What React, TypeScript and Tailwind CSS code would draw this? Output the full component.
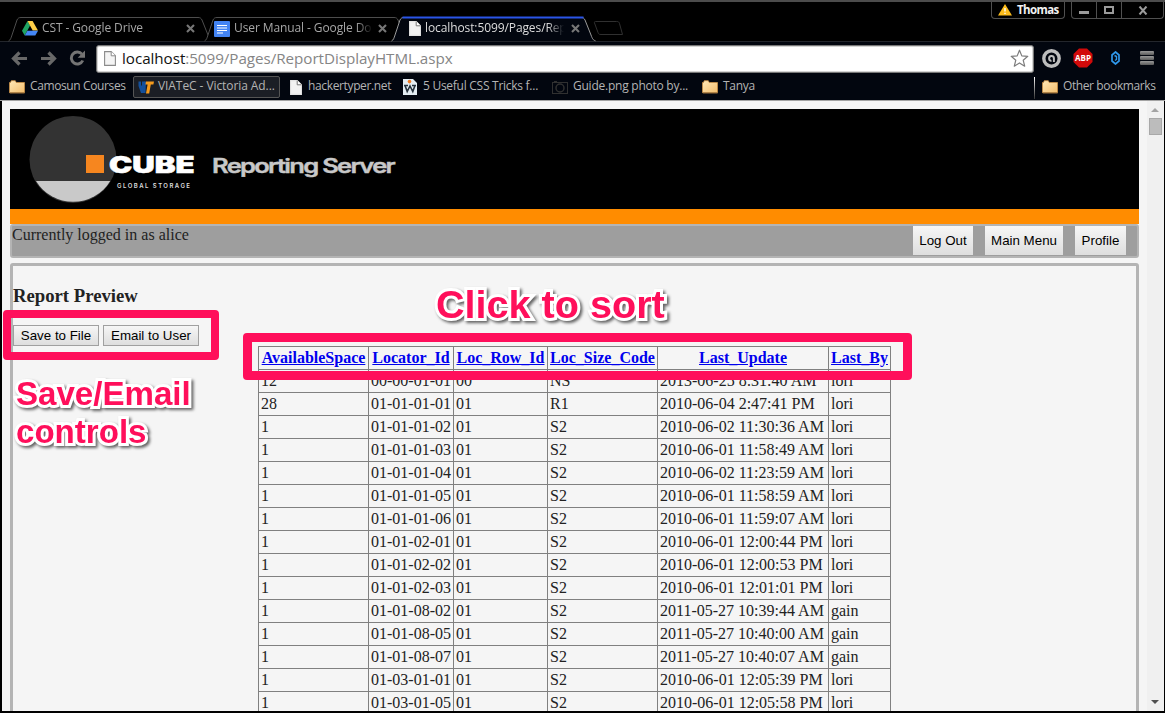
import type { ReactNode } from "react";

const rows = [
  ["12", "00-00-01-01", "00", "NS", "2013-06-25 8:31:40 AM", "lori"],
  ["28", "01-01-01-01", "01", "R1", "2010-06-04 2:47:41 PM", "lori"],
  ["1", "01-01-01-02", "01", "S2", "2010-06-02 11:30:36 AM", "lori"],
  ["1", "01-01-01-03", "01", "S2", "2010-06-01 11:58:49 AM", "lori"],
  ["1", "01-01-01-04", "01", "S2", "2010-06-02 11:23:59 AM", "lori"],
  ["1", "01-01-01-05", "01", "S2", "2010-06-01 11:58:59 AM", "lori"],
  ["1", "01-01-01-06", "01", "S2", "2010-06-01 11:59:07 AM", "lori"],
  ["1", "01-01-02-01", "01", "S2", "2010-06-01 12:00:44 PM", "lori"],
  ["1", "01-01-02-02", "01", "S2", "2010-06-01 12:00:53 PM", "lori"],
  ["1", "01-01-02-03", "01", "S2", "2010-06-01 12:01:01 PM", "lori"],
  ["1", "01-01-08-02", "01", "S2", "2011-05-27 10:39:44 AM", "gain"],
  ["1", "01-01-08-05", "01", "S2", "2011-05-27 10:40:00 AM", "gain"],
  ["1", "01-01-08-07", "01", "S2", "2011-05-27 10:40:07 AM", "gain"],
  ["1", "01-03-01-01", "01", "S2", "2010-06-01 12:05:39 PM", "lori"],
  ["1", "01-03-01-05", "01", "S2", "2010-06-01 12:05:58 PM", "lori"],
];

const headers = ["AvailableSpace", "Locator_Id", "Loc_Row_Id", "Loc_Size_Code", "Last_Update", "Last_By"];

function PageIcon({ outline = false }: { outline?: boolean }) {
  return (
    <svg width="12" height="15" viewBox="0 0 12 15" className="shrink-0">
      <path
        d="M.6.6h6.6l4.2 4.2v9.6H.6z"
        fill={outline ? "#f4f4f4" : "#f2f2f2"}
        stroke={outline ? "#8a8a8a" : "#e4e4e4"}
        strokeWidth="1.1"
      />
      <path d="M7.2.6v4.2h4.2" fill="#fff" stroke={outline ? "#8a8a8a" : "#777"} strokeWidth="1" />
    </svg>
  );
}

function Folder() {
  return (
    <svg width="16" height="14" viewBox="0 0 16 14" className="shrink-0">
      <defs>
        <linearGradient id="folder" x1="0" y1="0" x2="1" y2="1">
          <stop offset="0" stopColor="#ffe9b8" />
          <stop offset="1" stopColor="#f3bd6c" />
        </linearGradient>
      </defs>
      <path d="M.5 2.5h1l.8-1.8h4l.9 1.8h8.3v10.2H.5z" fill="url(#folder)" stroke="#c98f45" strokeWidth=".8" />
      <path d="M1 13.2h14.5" stroke="#7a5a34" strokeWidth=".8" />
    </svg>
  );
}

function TabClose() {
  return (
    <svg width="9" height="9" viewBox="0 0 9 9" className="shrink-0">
      <path d="M1 1l7 7M8 1L1 8" stroke="#777" strokeWidth="2.1" />
    </svg>
  );
}

function Tab({ active, icon, title, className }: { active?: boolean; icon: ReactNode; title: string; className: string }) {
  return (
    <div className={`relative flex h-[25px] shrink-0 items-center ${className}`}>
      <svg className="absolute left-0 top-0" width="206" height="26" viewBox="0 0 206 26">
        <path
          d="M.5 25c2-1 2.500-3 3.500-6L9 4c1-2 2-2.500 4-2.500h177c2 0 3 .5 4 2.500l6 15c1.500 4 2 5 4.500 5.800"
          fill={active ? "#02060f" : "#000"}
          stroke={active ? "#9a9a9a" : "#4d4d4d"}
        />
        {active && <path d="M11.500 1.500h181" stroke="#2a55e8" strokeWidth="2" />}
      </svg>
      <div className="relative flex w-full items-center">
        {icon}
        <span className={`mb-[2px] ml-[4px] w-[139px] whitespace-nowrap font-['Open_Sans',sans-serif] text-[12px] leading-[18px] ${active ? "tracking-[-0.1px] text-[#dcdcdc]" : "tracking-[-0.1px] text-[#a6a6a6]"} [mask-image:linear-gradient(to_right,black_88%,transparent)]`}>
          {title}
        </span>
        <span className="ml-auto flex"><TabClose /></span>
      </div>
    </div>
  );
}

function Bookmark({ icon, text, className = "" }: { icon: ReactNode; text: string; className?: string }) {
  return (
    <div className={`flex h-[22px] shrink-0 items-center whitespace-nowrap text-[12px] leading-[18px] text-[#b4b4b4] ${className}`}>
      {icon}
      <span className="mb-[2px]">{text}</span>
    </div>
  );
}

function TitleBar() {
  return (
    <div className="flex h-[17px] shrink-0 justify-end border-t-2 border-[#4c4c4c] pr-px font-['Open_Sans',sans-serif]">
      <div className="flex h-[17px] w-[74px] items-center rounded-b-[4px] border border-t-0 border-[#505050] pl-[6px]">
        <svg width="14" height="12" viewBox="0 0 14 12">
          <path d="M7 0l7 11.500H0z" fill="#fdbd1c" />
          <path d="M7 4v3.600M7 8.700v1.300" stroke="#fff" strokeWidth="1.400" />
        </svg>
        <span className="ml-[5px] text-[11.500px] font-bold leading-[16px] tracking-[-0.6px] text-[#f2f2f2]">Thomas</span>
      </div>
      <div className="ml-[6px] flex h-[17px] w-[93px] rounded-b-[4px] border border-t-0 border-[#505050]">
        <div className="flex w-[25px] items-center justify-center border-r border-[#505050]"><i className="mt-[4px] h-[3px] w-[10px] bg-[#9b9b9b]" /></div>
        <div className="flex w-[25px] items-center justify-center border-r border-[#505050]"><i className="h-[8px] w-[10px] border-2 border-[#9b9b9b]" /></div>
        <div className="flex flex-1 items-center justify-center">
          <svg width="10" height="9" viewBox="0 0 10 9"><path d="M1.500.5l7 8M8.500.5l-7 8" stroke="#9b9b9b" strokeWidth="2" /></svg>
        </div>
      </div>
    </div>
  );
}

function TabStrip() {
  const drive = (
    <svg width="16" height="15" viewBox="0 0 16 15" className="shrink-0">
      <path d="M5.500 0L0 9.800l2.700 4.700L8.100 4.600z" fill="#1fa463" />
      <path d="M5.500 0h5.100L16 9.500h-5.300z" fill="#ffcf48" />
      <path d="M5.400 9.800H16l-2.700 4.700H2.700z" fill="#4587f4" />
    </svg>
  );
  const docs = (
    <svg width="16" height="16" viewBox="0 0 16 16" className="shrink-0">
      <rect width="16" height="16" rx="1" fill="#4384f3" />
      <path d="M3 4.500h10M3 7h10M3 9.500h10M3 12h6" stroke="#fff" strokeWidth="1.200" />
    </svg>
  );
  return (
    <div className="-mt-px flex h-[25px] shrink-0 pl-[8px]">
      <Tab icon={drive} title="CST - Google Drive" className="w-[196px] pl-[14px] pr-[9px]" />
      <Tab icon={docs} title="User Manual - Google Do" className="w-[187px] pl-[10px] pr-[4px]" />
      <Tab active icon={<PageIcon />} title="localhost:5099/Pages/Rep" className="z-10 w-[202px] pl-[18px] pr-[13px]" />
      <svg width="32" height="24" viewBox="0 0 32 24" className="shrink-0">
        <path d="M2.500 5.500h21c2 0 2.500.5 3 2l3 11H8c-2 0-2.500-.5-3-2L1.500 7c-.3-1 0-1.500 1-1.500z" fill="none" stroke="#303030" />
      </svg>
    </div>
  );
}

function Toolbar() {
  return (
    <div className="flex h-[32px] shrink-0 items-center bg-[#02060f] pl-[11px]">
      <svg width="17" height="15" viewBox="0 0 17 15"><path d="M8.500 1.500L2.500 7.500l6 6M3 7.500h13" fill="none" stroke="#686868" strokeWidth="3.200" /></svg>
      <svg className="ml-[12px]" width="17" height="15" viewBox="0 0 17 15"><path d="M8.500 1.500l6 6-6 6M14 7.500H1" fill="none" stroke="#686868" strokeWidth="3.200" /></svg>
      <svg className="ml-[12px]" width="17" height="16" viewBox="0 0 17 16">
        <path d="M13 4.200A6 6 0 1 0 13.800 10.500" fill="none" stroke="#747474" strokeWidth="2.900" />
        <path d="M16 .5v7.300H8.700z" fill="#747474" />
      </svg>
      <div className="ml-[10px] mt-[1px] flex h-[28px] w-[938px] shrink-0 items-center rounded-[3px] border border-[#777] bg-white pl-[7px] pr-[4px] shadow-[inset_0_0_0_1px_#d4d4d4]">
        <PageIcon outline />
        <span className="mb-[2px] ml-[6px] flex-1 whitespace-nowrap font-['Open_Sans',sans-serif] text-[15.200px] leading-[22px] tracking-[-0.04px] text-[#858585]">
          <span className="text-[#111]">localhost</span>:5099/Pages/ReportDisplayHTML.aspx
        </span>
        <svg width="19" height="19" viewBox="0 0 19 19">
          <path d="M9.500 1.200l2.300 5.700 6 .4-4.600 3.900 1.500 6-5.200-3.300-5.200 3.300 1.500-6L1.200 7.300l6-.4z" fill="#fff" stroke="#7c7c7c" strokeWidth="1.200" strokeLinejoin="round" />
        </svg>
      </div>
      <svg className="ml-[8px]" width="19" height="19" viewBox="0 0 19 19">
        <circle cx="9.500" cy="9.500" r="7.700" fill="none" stroke="#bdbdbd" strokeWidth="3.400" />
        <path d="M11.900 13V9.300a2.400 2.400 0 1 0-2.400 2.600" fill="none" stroke="#bdbdbd" strokeWidth="2" />
      </svg>
      <svg className="ml-[12px]" width="20" height="20" viewBox="0 0 20 20">
        <path d="M6 .5h8L19.500 6v8L14 19.500H6L.5 14V6z" fill="#d20a0a" />
        <text x="10" y="13.400" textAnchor="middle" textLength="16" lengthAdjust="spacingAndGlyphs" fontFamily="Open Sans, sans-serif" fontSize="9.500" fontWeight="700" fill="#fff">ABP</text>
      </svg>
      <svg className="ml-[18px]" width="9" height="14" viewBox="0 0 9 14">
        <path d="M4.500 1L8 4v6l-3.500 3L1 10V4z" fill="none" stroke="#2f97ea" strokeWidth="1.700" />
        <path d="M3.500 4.500l2 1v3l-1.500 1" fill="none" stroke="#2f97ea" strokeWidth="1.400" />
      </svg>
      <div className="ml-[20px] flex flex-col gap-[1px]">
        {[0, 1, 2].map((i) => <i key={i} className="h-[4px] w-[14px] rounded-[1px] bg-linear-to-b from-[#999] to-[#5b5b5b]" />)}
      </div>
    </div>
  );
}

function BookmarksBar() {
  const viatec = (
    <svg width="16" height="13" viewBox="0 0 16 13" className="shrink-0">
      <path d="M.5.500h2.500v4h1v-4h2.500v4L5.500 12H3L.5 5z" fill="#14509c" />
      <path d="M6 .5h2L7.500 12H5z" fill="#14509c" />
      <path d="M8 .5h8l-.6 3h-2.600L11.200 12.500H8l1.600-9H7.400z" fill="#f59a1c" />
    </svg>
  );
  const word = (
    <svg width="14" height="16" viewBox="0 0 14 16" className="shrink-0">
      <path d="M0 0h10l4 4v12H0z" fill="#e4edf2" />
      <circle cx="6.500" cy="2.600" r="1.800" fill="#ef7b22" />
      <path d="M2 6.500l2.200 6L7 7l2.800 5.500 2.200-6M1 6.500h4M9 6.500h4" fill="none" stroke="#26323c" strokeWidth="1.600" />
    </svg>
  );
  const camera = (
    <svg width="16" height="13" viewBox="0 0 16 13" className="shrink-0" fill="none" stroke="#303030">
      <rect x=".5" y="1.500" width="15" height="11" /><circle cx="8" cy="7" r="4" strokeWidth="1.500" /><path d="M2 .5h3" />
    </svg>
  );
  return (
    <div className="flex h-[27px] shrink-0 items-center border-b border-[#a3a3a3] bg-[#02060f] pl-[9px] font-['Open_Sans',sans-serif]">
      <Bookmark icon={<Folder />} text="Camosun Courses" className="w-[124px] gap-[5px] tracking-[-0.38px]" />
      <Bookmark icon={viatec} text="VIATeC - Victoria Ad..." className="w-[147px] gap-[4px] rounded-[2px] border border-[#555] bg-[#1b1e25] pl-[4px] tracking-[-0.08px]" />
      <Bookmark icon={<PageIcon />} text="hackertyper.net" className="ml-[10px] w-[113px] gap-[6px] tracking-[-0.36px]" />
      <Bookmark icon={word} text="5 Useful CSS Tricks f..." className="w-[149px] gap-[6px] tracking-[-0.27px]" />
      <Bookmark icon={camera} text="Guide.png photo by..." className="w-[150px] gap-[5px] tracking-[-0.24px]" />
      <Bookmark icon={<Folder />} text="Tanya" className="gap-[5px] tracking-[-0.3px]" />
      <div className="ml-auto mt-[2px] h-[22px] w-px bg-linear-to-b from-white to-[#333]" />
      <Bookmark icon={<Folder />} text="Other bookmarks" className="ml-[7px] w-[123px] gap-[5px] tracking-[-0.4px]" />
    </div>
  );
}

function Banner() {
  return (
    <div className="h-[100px] bg-black">
      <svg width="400" height="100" viewBox="0 0 400 100">
        <circle cx="63" cy="50.500" r="43.500" fill="#333" />
        <path d="M26 72h74.300A43.500 43.500 0 0 1 26 72z" fill="#c9c9c9" />
        <rect x="76" y="46" width="18" height="18" fill="#f6861f" />
        <g fontFamily="Inter, sans-serif">
          <text x="99" y="63.700" textLength="85.500" lengthAdjust="spacingAndGlyphs" fontSize="22.500" fontWeight="900" fill="#fff" stroke="#fff" strokeWidth=".6">CUBE</text>
          <text x="107" y="79" textLength="73" lengthAdjust="spacing" fontSize="6" fontWeight="600" fill="#ddd">GLOBAL STORAGE</text>
          <text x="202" y="64" textLength="182" lengthAdjust="spacingAndGlyphs" letterSpacing="-1.300" fontSize="19.500" fontWeight="600" fill="#c8c8c8" stroke="#c8c8c8" strokeWidth=".4">Reporting Server</text>
        </g>
      </svg>
    </div>
  );
}

function FormButton({ children, className }: { children: ReactNode; className: string }) {
  return (
    <button className={`bg-linear-to-b from-[#f6f6f6] to-[#dedede] text-center font-['Liberation_Sans',sans-serif] text-[13.333px] leading-[15px] whitespace-nowrap text-black ${className}`}>
      {children}
    </button>
  );
}

function ReportTable() {
  return (
    <table className="mx-auto w-[633px] table-fixed border-collapse text-[16px] leading-[18px]">
      <colgroup>
        <col className="w-[110px]" /><col className="w-[85px]" /><col className="w-[94px]" />
        <col className="w-[110px]" /><col className="w-[171px]" /><col className="w-[62px]" />
      </colgroup>
      <thead>
        <tr className="h-[23px]">
          {headers.map((h) => (
            <th key={h} className="border border-[#808080] p-0 px-px text-center font-bold text-[#0000ee] underline">{h}</th>
          ))}
        </tr>
      </thead>
      <tbody>
        {rows.map((row) => (
          <tr key={row[1]} className="h-[23px]">
            {row.map((cell, i) => (
              <td key={i} className="border border-[#808080] p-0 pl-[2px] whitespace-nowrap">{cell}</td>
            ))}
          </tr>
        ))}
      </tbody>
    </table>
  );
}

const calloutText =
  "absolute font-['Liberation_Sans',sans-serif] font-bold whitespace-nowrap text-[#ff0f5b] [-webkit-text-stroke:6px_white] [paint-order:stroke_fill] [stroke-linejoin:round] [filter:drop-shadow(2px_2px_1.5px_rgba(0,0,0,0.6))]";

export default function App() {
  return (
    <div className="relative flex h-[713px] w-[1165px] flex-col overflow-hidden bg-black">
      <TitleBar />
      <TabStrip />
      <div className="h-0 shrink-0 border-t border-[#23262c]" />
      <Toolbar />
      <BookmarksBar />

      <div className="mb-[2px] ml-[2px] mr-px flex min-h-0 flex-1 overflow-hidden bg-[#f5f5f5] font-['Liberation_Serif',serif] text-[#222]">
        <main className="min-w-0 flex-1 px-[8px] pt-[8px]">
          <Banner />
          <div className="h-[15px] bg-[#ff8c00]" />
          <div className="flex h-[34px] rounded-[3px] border-2 border-[#b4b4b4] bg-[#9e9e9e] pr-[11px]">
            <span className="text-[16px] leading-[18px]">Currently logged in as alice</span>
            <div className="ml-auto flex gap-[12px]">
              <FormButton className="h-[29px] w-[60px]">Log Out</FormButton>
              <FormButton className="h-[29px] w-[78px]">Main Menu</FormButton>
              <FormButton className="h-[29px] w-[51px]">Profile</FormButton>
            </div>
          </div>
          <section className="mt-[5px] h-[600px] rounded-[3px] border-[3px] border-[#b4b4b4]">
            <h3 className="pt-[19px] text-[18.720px] font-bold leading-[21px]">Report Preview</h3>
            <div className="mt-[19px] flex gap-[4px]">
              <FormButton className="h-[21px] w-[86px] border border-[#a0a0a0]">Save to File</FormButton>
              <FormButton className="h-[21px] w-[96px] border border-[#a0a0a0]">Email to User</FormButton>
            </div>
            <ReportTable />
          </section>
        </main>
        <div className="flex w-[17px] shrink-0 flex-col items-center bg-[#f0f0f0] pr-px pt-[7px]">
          <svg width="8" height="4" viewBox="0 0 8 4"><path d="M4 0l4 4H0z" fill="#a3a3a3" /></svg>
          <div className="mt-[6px] h-[17px] w-[13px] border border-[#a8a8a8] bg-[#bcbcbc]" />
          <svg className="mb-[7px] mt-auto" width="8" height="4" viewBox="0 0 8 4"><path d="M0 0h8L4 4z" fill="#505050" /></svg>
        </div>
      </div>

      <div className="absolute left-[3px] top-[310px] h-[50px] w-[216px] rounded-[4px] border-[8.500px] border-[#ff0f5b]" />
      <div className="absolute left-[243px] top-[333px] h-[47px] w-[669px] rounded-[4px] border-[9px] border-[#ff0f5b]" />
      <div className={`${calloutText} left-[436px] top-[281px] text-[39.600px] leading-[46px]`}>Click to sort</div>
      <div className={`${calloutText} left-[16px] top-[375px] text-[33.100px] leading-[38px]`}>Save/Email<br />controls</div>
    </div>
  );
}
